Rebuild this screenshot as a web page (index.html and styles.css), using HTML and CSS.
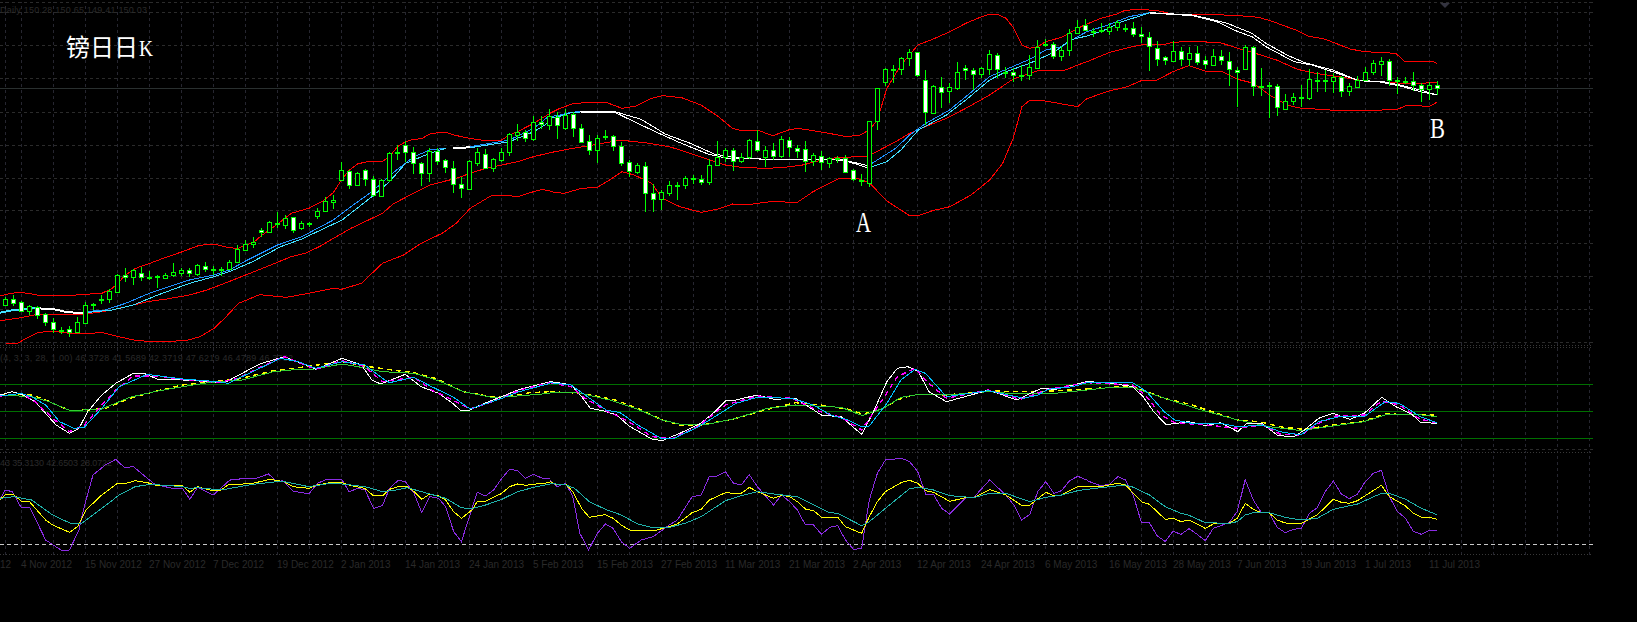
FILE: index.html
```html
<!DOCTYPE html>
<html lang="zh">
<head>
<meta charset="utf-8">
<title>镑日日K</title>
<link rel="stylesheet" href="styles.css">
</head>
<body>
<main class="chart">
<svg width="0" height="0" class="defs">
  <defs>
    <pattern id="vgrid" x="21" y="0" width="32" height="6" patternUnits="userSpaceOnUse"><rect width="1" height="3" class="vdash"/></pattern>
    <pattern id="vgrid0" x="5" y="0" width="1593" height="6" patternUnits="userSpaceOnUse"><rect width="1" height="3" class="vdash"/></pattern>
  </defs>
</svg>

<svg class="pane pane-main" viewBox="0 0 1593 344">
  <rect x="21" y="2" width="1569" height="342" fill="url(#vgrid)"/>
  <rect x="5" y="2" width="1" height="342" fill="url(#vgrid0)"/>
  <path class="hgrid" d="M0 2.5H1593M0 12.5H1593M0 45.5H1593M0 78.5H1593M0 112.5H1593M0 145.5H1593M0 178.5H1593M0 210.5H1593M0 243.5H1593M0 276.5H1593M0 309.5H1593M0 342.5H1593"/>
  <path class="price" d="M0 88.5H1593"/>
  <text class="dim" x="0" y="13" textLength="147">Daily 150.28 150.65 149.41 150.03</text>
  <path class="marker" d="M1440 3h10l-5 5z"/>

  <g transform="scale(.35088,.33333)">
    <polyline class="ln red" points="0,888 30,880 60,877 90,882 120,888 180,888 240,883 290,880 320,865 335,850 358,825 381,808 404,798 427,790 470,773 520,755 563,738 590,733 615,733 650,743 680,745 700,735 723,727 745,707 768,690 791,672 830,640 880,625 920,603 950,578 973,540 996,510 1019,492 1042,486 1090,484 1110,470 1133,440 1156,425 1179,418 1202,416 1225,402 1250,398 1270,397 1293,405 1338,415 1384,422 1430,420 1452,405 1475,395 1521,370 1544,355 1568,340"/>
    <polyline class="ln red" points="0,962 60,953 107,943 150,944 240,943 310,932 380,915 420,905 475,897 540,885 590,870 640,850 700,825 760,800 830,770 870,760 910,740 950,715 1000,685 1060,655 1090,640 1120,612 1160,590 1225,555 1300,535 1340,520 1384,505 1430,495 1475,485 1521,470 1568,458"/>
    <polyline class="ln red" points="0,1033 50,1030 80,1012 110,997 150,994 200,1000 240,1002 290,997 330,1008 390,1022 450,1025 530,1022 570,1010 610,985 640,955 680,910 740,884 815,892 870,882 950,865 973,868 1030,850 1060,820 1090,790 1150,765 1200,730 1260,700 1300,670 1340,625 1400,587 1450,587 1475,590 1521,575 1545,568 1568,573"/>
    <polyline class="ln fat cyan" points="0,938 40,930 84,925 107,925"/>
    <polyline class="ln fat white" points="107,925 150,927 190,936 236,940"/>
    <polyline class="ln blue" points="244,935 300,930 358,910 430,878 540,840 610,825 654,810 700,783 791,735 860,710 950,660 1000,620 1060,575 1130,510 1180,470 1225,450 1270,445"/>
    <polyline class="ln cyan" points="244,938 320,930 380,915 450,885 540,850 610,830 654,815 720,785 800,740 860,717 975,660 1060,590 1110,545 1156,490 1225,460 1270,445"/>
    <polyline class="ln fat white" points="1290,444 1340,442"/>
    <polyline class="ln blue" points="1340,440 1452,420 1521,385 1568,345"/>
    <polyline class="ln cyan" points="1340,443 1452,425 1521,395 1568,365"/>
  </g>
  <g transform="translate(550,0) scale(.35088,.33333)">
    <polyline class="ln red" points="0,340 22,328 65,311 110,307 160,307 205,325 245,318 290,295 320,287 375,293 430,315 480,350 520,385 545,392 590,390 635,407 680,390 705,385 750,392 800,401 840,409 880,407 910,390 933,360 960,265 1000,195 1025,165 1048,135 1090,118 1140,95 1185,70 1230,50 1253,43 1276,43 1300,55 1322,85 1345,135 1367,145 1390,140 1413,125 1458,112 1504,85 1530,72"/>
    <polyline class="ln red" points="0,458 65,445 135,433 180,424 205,421 270,428 340,440 400,460 450,478 500,495 545,502 610,505 660,503 720,495 775,480 820,472 900,470 918,462 985,425 1025,400 1070,380 1130,355 1185,325 1253,285 1320,237 1390,212 1470,210 1504,195 1530,185"/>
    <polyline class="ln red" points="0,575 40,580 90,565 135,562 170,540 205,515 240,525 290,550 320,595 370,620 430,637 480,627 520,612 570,613 630,605 705,607 750,575 820,537 880,537 910,548 960,603 1025,647 1050,647 1090,632 1140,620 1200,585 1253,540 1290,490 1320,415 1345,320 1367,301 1400,301 1504,320 1530,296"/>
    <polyline class="ln blue" points="0,350 30,345 60,337 85,335"/>
    <polyline class="ln cyan" points="0,355 30,348 60,338 85,336"/>
    <polyline class="ln white" points="85,334 185,335 260,358 330,403 400,430 470,463 560,476 660,479 770,477 830,478 905,497"/>
    <polyline class="ln white" points="85,336 185,337 230,360 300,395 370,428 450,462 500,474 600,477 700,479 800,478 850,485 905,503"/>
    <polyline class="ln blue" points="918,490 985,445 1025,405 1071,370 1139,330 1185,290 1253,230 1300,208 1367,178 1413,150 1458,140 1504,110 1530,95"/>
    <polyline class="ln cyan" points="918,500 960,485 1000,450 1050,390 1130,345 1185,300 1253,240 1300,215 1367,190 1440,155 1481,120 1530,108"/>
  </g>
  <g transform="translate(1087,0) scale(.35088,.33333)">
    <polyline class="ln red" points="0,72 40,55 85,42 108,31 155,28 200,32 245,42 330,43 420,46 490,52 530,65 600,92 630,108 680,118 750,147 790,155 880,160 905,184 985,184 997,190"/>
    <polyline class="ln red" points="0,185 65,157 130,140 155,135 220,133 245,127 300,124 380,128 430,145 480,160 540,180 600,208 650,220 730,232 790,243 840,246 900,250 950,250 997,247"/>
    <polyline class="ln red" points="0,296 65,272 110,262 155,242 200,240 245,215 290,197 340,214 385,215 430,238 475,250 520,285 570,315 610,325 650,327 720,332 800,332 885,328 910,316 945,317 975,320 997,307"/>
    <polyline class="ln blue" points="0,95 60,75 120,50 180,38"/>
    <polyline class="ln cyan" points="0,108 50,90 100,65 180,38"/>
    <polyline class="ln white" points="180,38 300,45 350,57 400,70 470,100 510,130 570,165 620,188 700,210 770,240 800,245 850,246 900,257 950,270 997,285"/>
    <polyline class="ln white" points="180,39 300,47 370,65 430,95 470,110 510,140 590,185 640,195 700,215 770,240 830,245 900,260 950,275 997,285"/>
  </g>

  <path class="wick" d="M5.5 297V306M13.5 295V306M21.5 301V312M29.5 305V315M37.5 306V319M45.5 313V326M53.5 318V333M61.5 327V334M69.5 326V337M77.5 317V333M85.5 302V324M93.5 303V310M101.5 295V304M109.5 289V303M117.5 274V293M125.5 268V282M133.5 269V285M141.5 267V281M149.5 271V280M157.5 275V288M165.5 273V279M173.5 263V277M181.5 268V276M189.5 268V277M197.5 264V276M205.5 262V272M213.5 266V275M221.5 267V276M229.5 260V270M237.5 245V263M245.5 240V251M253.5 237V248M261.5 228V237M269.5 221V233M277.5 212V228M285.5 215V229M293.5 217V233M301.5 221V230M309.5 222V227M317.5 208V219M325.5 197V212M333.5 195V209M341.5 162V180M349.5 170V189M357.5 172V186M365.5 169V186M373.5 176V197M381.5 179V197M389.5 152V182M397.5 145V160M405.5 141V162M413.5 147V174M421.5 162V186M429.5 148V182M437.5 148V165M445.5 159V173M453.5 161V193M461.5 177V198M469.5 160V190M477.5 148V166M485.5 149V168M493.5 158V172M501.5 148V162M509.5 133V156M517.5 124V141M525.5 130V142M533.5 116V141M541.5 116V129M549.5 109V130M557.5 112V139M565.5 109V130M573.5 112V137M581.5 124V143M589.5 135V155M597.5 135V163M605.5 130V140M613.5 135V151M621.5 142V166M629.5 160V177M637.5 163V174M645.5 162V212M653.5 184V212M661.5 190V210M669.5 181V196M677.5 182V200M685.5 176V189M693.5 175V184M701.5 175V185M709.5 159V185M717.5 141V166M725.5 148V162M733.5 148V171M741.5 153V163M749.5 139V159M757.5 130V152M765.5 146V167M773.5 143V160M781.5 136V158M789.5 137V157M797.5 145V158M805.5 141V172M813.5 153V166M821.5 151V170M829.5 157V168M837.5 156V163M845.5 155V173M853.5 169V181M861.5 174V186M869.5 121V187M877.5 88V130M885.5 68V86M893.5 65V83M901.5 57V75M909.5 49V66M917.5 52V77M925.5 70V125M933.5 85V114M941.5 77V108M949.5 83V103M957.5 62V90M965.5 65V80M973.5 68V90M981.5 67V78M989.5 50V75M997.5 53V78M1005.5 67V78M1013.5 68V82M1021.5 65V81M1029.5 55V80M1037.5 40V68M1045.5 39V47M1053.5 42V59M1061.5 46V61M1069.5 29V56M1077.5 20V34M1085.5 19V31M1093.5 28V37M1101.5 23V33M1109.5 23V35M1117.5 20V31M1125.5 24V32M1133.5 22V37M1141.5 27V43M1149.5 32V71M1157.5 41V66M1165.5 56V65M1173.5 41V62M1181.5 47V66M1189.5 47V66M1197.5 46V65M1205.5 56V69M1213.5 49V66M1221.5 50V65M1229.5 52V86M1237.5 67V107M1245.5 45V70M1253.5 46V96M1261.5 68V96M1269.5 82V118M1277.5 84V116M1285.5 94V110M1293.5 93V105M1301.5 85V107M1309.5 69V100M1317.5 72V92M1325.5 70V92M1333.5 73V93M1341.5 76V97M1349.5 83V96M1357.5 76V87M1365.5 67V81M1373.5 60V75M1381.5 57V76M1389.5 59V86M1397.5 77V94M1405.5 77V84M1413.5 72V91M1421.5 83V102M1429.5 82V100M1437.5 81V95"/>
  <path class="body-up" d="M3.5 299.5h4v6h-4zM27.5 306.5h4v5h-4zM59.5 330.5h4v1h-4zM75.5 322.5h4v10h-4zM83.5 305.5h4v18h-4zM99.5 299.5h4v1h-4zM107.5 291.5h4v8h-4zM115.5 275.5h4v17h-4zM131.5 270.5h4v7h-4zM147.5 277.5h4v1h-4zM155.5 276.5h4v1h-4zM163.5 275.5h4v3h-4zM171.5 272.5h4v3h-4zM179.5 270.5h4v3h-4zM195.5 265.5h4v9h-4zM211.5 269.5h4v1h-4zM219.5 269.5h4v1h-4zM227.5 262.5h4v7h-4zM235.5 249.5h4v13h-4zM243.5 244.5h4v6h-4zM251.5 242.5h4v2h-4zM267.5 222.5h4v10h-4zM283.5 218.5h4v7h-4zM299.5 223.5h4v5h-4zM307.5 223.5h4v1h-4zM315.5 211.5h4v5h-4zM323.5 201.5h4v10h-4zM331.5 200.5h4v2h-4zM339.5 170.5h4v10h-4zM355.5 173.5h4v12h-4zM379.5 180.5h4v16h-4zM387.5 153.5h4v27h-4zM395.5 152.5h4v1h-4zM427.5 151.5h4v22h-4zM467.5 161.5h4v28h-4zM475.5 152.5h4v11h-4zM491.5 159.5h4v9h-4zM499.5 152.5h4v8h-4zM507.5 134.5h4v18h-4zM515.5 132.5h4v3h-4zM531.5 122.5h4v17h-4zM547.5 116.5h4v9h-4zM563.5 115.5h4v13h-4zM595.5 138.5h4v12h-4zM603.5 136.5h4v1h-4zM635.5 165.5h4v7h-4zM659.5 192.5h4v7h-4zM667.5 185.5h4v8h-4zM675.5 185.5h4v1h-4zM683.5 178.5h4v7h-4zM691.5 178.5h4v1h-4zM707.5 165.5h4v17h-4zM715.5 157.5h4v8h-4zM723.5 150.5h4v7h-4zM739.5 157.5h4v4h-4zM747.5 140.5h4v17h-4zM763.5 150.5h4v7h-4zM779.5 139.5h4v17h-4zM811.5 155.5h4v6h-4zM827.5 158.5h4v5h-4zM835.5 158.5h4v1h-4zM867.5 121.5h4v62h-4zM875.5 88.5h4v33h-4zM883.5 69.5h4v13h-4zM891.5 69.5h4v1h-4zM899.5 58.5h4v11h-4zM907.5 52.5h4v6h-4zM931.5 86.5h4v27h-4zM947.5 87.5h4v4h-4zM955.5 72.5h4v16h-4zM979.5 68.5h4v6h-4zM987.5 54.5h4v15h-4zM1003.5 72.5h4v1h-4zM1019.5 75.5h4v1h-4zM1027.5 67.5h4v8h-4zM1035.5 47.5h4v21h-4zM1043.5 44.5h4v1h-4zM1059.5 50.5h4v6h-4zM1067.5 33.5h4v17h-4zM1075.5 27.5h4v6h-4zM1091.5 31.5h4v1h-4zM1099.5 30.5h4v1h-4zM1107.5 27.5h4v4h-4zM1115.5 22.5h4v5h-4zM1123.5 28.5h4v1h-4zM1171.5 51.5h4v10h-4zM1187.5 53.5h4v6h-4zM1211.5 56.5h4v9h-4zM1243.5 47.5h4v22h-4zM1259.5 86.5h4v1h-4zM1267.5 85.5h4v1h-4zM1283.5 101.5h4v8h-4zM1291.5 97.5h4v4h-4zM1299.5 97.5h4v1h-4zM1307.5 79.5h4v19h-4zM1315.5 80.5h4v1h-4zM1323.5 80.5h4v1h-4zM1331.5 77.5h4v4h-4zM1347.5 86.5h4v5h-4zM1355.5 80.5h4v7h-4zM1363.5 72.5h4v8h-4zM1371.5 63.5h4v9h-4zM1379.5 61.5h4v3h-4zM1395.5 80.5h4v1h-4zM1403.5 81.5h4v1h-4zM1427.5 85.5h4v4h-4z"/>
  <path class="body-down" d="M11.5 299.5h4v4h-4zM19.5 302.5h4v9h-4zM35.5 307.5h4v8h-4zM43.5 314.5h4v8h-4zM51.5 322.5h4v7h-4zM67.5 329.5h4v3h-4zM91.5 304.5h4v1h-4zM123.5 275.5h4v2h-4zM139.5 273.5h4v4h-4zM187.5 270.5h4v3h-4zM203.5 266.5h4v3h-4zM259.5 230.5h4v2h-4zM275.5 223.5h4v1h-4zM291.5 217.5h4v13h-4zM347.5 171.5h4v14h-4zM363.5 170.5h4v9h-4zM371.5 179.5h4v16h-4zM403.5 145.5h4v7h-4zM411.5 152.5h4v11h-4zM419.5 163.5h4v10h-4zM435.5 151.5h4v10h-4zM443.5 160.5h4v7h-4zM451.5 168.5h4v16h-4zM459.5 184.5h4v4h-4zM483.5 154.5h4v14h-4zM523.5 132.5h4v6h-4zM539.5 122.5h4v2h-4zM555.5 117.5h4v8h-4zM571.5 114.5h4v14h-4zM579.5 128.5h4v14h-4zM587.5 141.5h4v9h-4zM611.5 136.5h4v10h-4zM619.5 146.5h4v17h-4zM627.5 162.5h4v9h-4zM643.5 166.5h4v27h-4zM651.5 193.5h4v6h-4zM699.5 179.5h4v3h-4zM731.5 150.5h4v11h-4zM755.5 141.5h4v9h-4zM771.5 150.5h4v6h-4zM787.5 140.5h4v7h-4zM795.5 148.5h4v3h-4zM803.5 149.5h4v12h-4zM819.5 156.5h4v6h-4zM843.5 158.5h4v14h-4zM851.5 170.5h4v9h-4zM859.5 180.5h4v1h-4zM915.5 52.5h4v23h-4zM923.5 80.5h4v32h-4zM939.5 87.5h4v5h-4zM963.5 68.5h4v2h-4zM971.5 70.5h4v4h-4zM995.5 55.5h4v14h-4zM1011.5 72.5h4v3h-4zM1051.5 44.5h4v12h-4zM1083.5 25.5h4v5h-4zM1131.5 28.5h4v6h-4zM1139.5 34.5h4v2h-4zM1147.5 37.5h4v9h-4zM1155.5 48.5h4v11h-4zM1163.5 57.5h4v3h-4zM1179.5 51.5h4v8h-4zM1195.5 53.5h4v9h-4zM1203.5 60.5h4v4h-4zM1219.5 56.5h4v4h-4zM1227.5 61.5h4v8h-4zM1235.5 70.5h4v2h-4zM1251.5 47.5h4v39h-4zM1275.5 86.5h4v21h-4zM1339.5 77.5h4v14h-4zM1387.5 61.5h4v19h-4zM1411.5 81.5h4v4h-4zM1419.5 85.5h4v4h-4zM1435.5 85.5h4v3h-4z"/>

  <text class="title" x="66" y="56">镑日日</text>
  <text class="title-k" x="139" y="56" textLength="14" lengthAdjust="spacingAndGlyphs">K</text>
  <text class="mark" x="856" y="232" textLength="15" lengthAdjust="spacingAndGlyphs">A</text>
  <text class="mark" x="1430" y="138" textLength="15" lengthAdjust="spacingAndGlyphs">B</text>
</svg>

<svg class="pane pane-osc1" viewBox="0 344 1593 107">
  <rect x="21" y="344" width="1569" height="105" fill="url(#vgrid)"/>
  <rect x="5" y="344" width="1" height="105" fill="url(#vgrid0)"/>
  <path class="hdot" d="M0 345.5H1593M0 347.5H1593"/>
  <path class="hgrid" d="M0 449.5H1593"/>
  <text class="dim" x="0" y="361" textLength="293">(4, 3, 3, 28, 1.00) 46.3728 41.5689 42.3719 47.6219 46.4789 46.3782</text>
  <path class="level" d="M0 384.5H1593M0 411.5H1593M0 438.5H1593"/>
  <g transform="translate(0,340) scale(.35088,.33333)">
    <polyline class="ln dash yellow" points="0,163 90,165 130,180 200,212 250,210 300,205 370,175 440,155 520,135 600,125 680,117 780,92 850,83 975,65 1040,78 1130,92 1180,98 1250,118 1320,155 1400,170 1450,170 1510,158 1568,155"/>
    <polyline class="ln lime" points="0,165 90,170 140,185 200,212 290,207 370,172 440,155 520,140 600,127 690,120 780,95 830,90 880,90 975,72 1030,82 1090,95 1180,100 1250,122 1320,155 1400,172 1450,170 1510,165 1568,160"/>
    <polyline class="ln white" points="0,165 35,155 65,165 100,185 130,220 160,255 198,280 225,265 250,215 290,165 330,130 380,100 410,100 450,118 520,120 600,125 640,128 690,100 740,72 810,50 860,70 900,88 975,55 1030,75 1060,120 1085,132 1155,103 1200,140 1250,160 1290,190 1315,213 1340,210 1380,190 1430,170 1480,148 1530,135 1568,125"/>
    <polyline class="ln dash magenta" points="0,168 60,160 100,185 150,235 198,275 240,255 290,195 330,150 380,108 450,108 520,118 620,127 680,115 740,82 810,50 900,88 975,62 1040,80 1090,125 1180,112 1230,150 1290,180 1340,207 1430,175 1480,150 1568,128"/>
    <polyline class="ln sky" points="0,168 60,160 90,170 130,195 170,245 210,265 240,262 290,205 340,140 420,103 520,117 620,125 650,130 730,90 800,55 850,65 900,85 975,65 1040,75 1090,115 1110,128 1180,112 1230,140 1290,170 1340,207 1430,175 1480,155 1568,130"/>
  </g>
  <g transform="translate(550,340) scale(.35088,.33333)">
    <polyline class="ln dash yellow" points="0,155 90,160 180,178 250,205 320,240 370,255 430,255 520,238 620,208 700,188 790,197 850,208 890,222 940,210 990,180 1040,163 1130,165 1250,152 1330,155 1400,155 1530,147"/>
    <polyline class="ln lime" points="0,158 80,158 170,180 250,208 320,240 380,255 440,255 530,235 620,205 700,195 830,202 890,227 950,205 1000,172 1040,165 1130,165 1250,155 1330,162 1420,162 1530,150"/>
    <polyline class="ln white" points="0,125 35,130 60,135 90,170 115,205 150,212 190,225 225,258 290,297 320,302 370,280 430,250 470,215 500,183 530,180 590,165 640,178 700,175 775,226 830,230 888,283 920,220 960,125 990,85 1020,80 1050,95 1080,155 1130,185 1200,165 1250,150 1330,180 1400,145 1440,148 1490,135 1530,125"/>
    <polyline class="ln dash magenta" points="0,128 60,140 100,175 160,212 225,245 290,290 350,295 420,260 500,195 590,168 690,175 770,215 830,232 888,270 950,175 990,110 1040,85 1080,130 1130,175 1250,150 1340,178 1420,148 1530,128"/>
    <polyline class="ln sky" points="0,128 60,135 100,165 160,210 200,218 250,255 320,297 350,297 420,262 470,230 530,190 590,172 690,175 750,195 800,225 850,240 888,260 910,258 960,190 1000,120 1040,88 1070,100 1130,170 1250,152 1350,175 1390,165 1420,148 1490,140 1530,128"/>
  </g>
  <g transform="translate(1087,340) scale(.35088,.33333)">
    <polyline class="ln dash yellow" points="0,147 130,138 220,175 290,192 350,213 430,240 490,245 560,262 620,268 700,255 790,243 850,222 990,225"/>
    <polyline class="ln lime" points="0,150 70,142 130,142 230,178 320,208 430,240 520,260 610,272 700,258 790,245 850,225 930,222 997,230"/>
    <polyline class="ln white" points="0,125 60,128 130,140 160,170 190,215 225,254 290,245 340,257 380,248 430,275 455,250 500,252 545,287 590,290 620,270 660,235 700,220 750,238 790,220 840,172 880,200 925,222 950,247 997,250"/>
    <polyline class="ln dash magenta" points="0,128 130,135 170,170 210,225 250,248 340,255 430,265 500,255 550,282 610,285 660,250 710,228 790,225 840,183 890,195 950,238 997,248"/>
    <polyline class="ln sky" points="0,128 130,128 170,155 220,215 250,240 300,250 380,250 430,260 500,255 550,275 610,285 660,245 720,230 790,230 850,185 890,190 950,230 997,248"/>
  </g>
</svg>

<svg class="pane pane-osc2" viewBox="0 451 1593 104">
  <rect x="21" y="451" width="1569" height="104" fill="url(#vgrid)"/>
  <rect x="5" y="451" width="1" height="104" fill="url(#vgrid0)"/>
  <path class="hdot" d="M0 452.5H1593"/>
  <text class="dim" x="0" y="466" textLength="112">43 35.3130 42.6503 28.0722</text>
  <path class="zero" d="M0 544.5H1593"/>
  <path class="hdot" d="M0 554.5H1593"/>
  <g transform="translate(0,340) scale(.35088,.33333)">
    <polyline class="ln violet" points="0,478 15,450 35,455 60,502 85,502 130,600 175,631 198,630 225,570 240,500 265,405 300,375 330,358 355,383 380,380 440,432 490,445 520,445 541,478 563,442 608,465 650,425 660,418 730,415 765,402 790,425 805,422 835,453 880,462 905,430 930,418 975,420 995,455 1020,445 1040,450 1065,505 1090,497 1110,445 1135,421 1155,425 1180,460 1202,518 1225,470 1250,475 1270,500 1293,575 1315,605 1360,457 1384,468 1407,450 1430,415 1452,388 1475,392 1498,415 1521,403 1544,414 1568,415"/>
    <polyline class="ln yellow" points="0,478 15,465 40,465 60,483 85,486 130,540 150,555 198,577 221,560 245,510 290,465 335,430 360,430 385,422 420,428 450,437 520,437 541,457 563,440 608,453 630,450 650,435 720,430 770,418 810,425 835,440 880,445 905,435 940,428 975,428 1000,437 1040,445 1065,468 1090,468 1110,448 1135,440 1160,440 1180,455 1202,478 1225,462 1250,468 1270,480 1293,515 1315,535 1345,510 1360,485 1384,484 1430,460 1452,440 1475,432 1498,436 1544,430 1568,428"/>
    <polyline class="ln teal" points="0,475 40,470 90,480 150,525 205,552 230,552 290,505 340,465 385,440 430,433 520,440 541,445 563,443 630,450 720,433 790,425 810,425 880,440 930,432 975,432 1040,440 1090,455 1130,450 1160,443 1225,462 1270,475 1315,503 1340,507 1384,495 1430,478 1475,455 1521,442 1568,432"/>
  </g>
  <g transform="translate(550,340) scale(.35088,.33333)">
    <polyline class="ln violet" points="0,420 20,440 45,430 65,470 85,580 110,630 135,580 158,552 180,565 203,605 227,625 260,600 294,590 340,555 363,540 405,470 431,465 454,410 477,408 500,395 523,430 545,435 568,404 591,440 637,495 660,465 683,485 705,510 728,555 751,555 774,583 797,562 820,557 842,600 865,628 888,626 910,480 933,400 956,360 1002,355 1025,365 1048,395 1071,463 1093,463 1116,505 1139,522 1185,473 1207,473 1253,420 1299,465 1322,495 1344,540 1367,524 1390,455 1413,425 1436,460 1458,452 1481,422 1504,409 1530,420"/>
    <polyline class="ln yellow" points="0,425 20,435 45,432 65,455 90,505 112,532 135,528 158,524 180,535 203,555 227,570 294,573 340,560 363,552 405,518 431,508 454,480 500,458 523,460 545,460 568,442 591,455 637,475 660,466 683,470 705,485 728,507 751,512 774,532 820,532 842,560 888,580 910,530 933,485 956,455 1002,427 1025,421 1048,430 1071,452 1093,457 1139,484 1185,473 1207,473 1253,449 1299,465 1344,496 1367,496 1413,457 1436,467 1458,465 1504,440 1530,440"/>
    <polyline class="ln teal" points="0,430 45,435 70,445 112,485 158,508 203,525 250,552 294,563 340,562 385,550 431,530 500,482 545,467 591,455 637,462 705,470 797,518 820,520 888,557 910,545 956,505 1025,446 1048,442 1093,450 1139,467 1207,473 1253,460 1299,460 1367,485 1413,472 1458,465 1504,452 1530,448"/>
  </g>
  <g transform="translate(1087,340) scale(.35088,.33333)">
    <polyline class="ln violet" points="0,422 40,438 65,432 88,410 110,420 133,470 155,547 178,549 200,587 223,605 245,574 268,583 291,566 314,583 337,602 360,565 405,548 428,515 451,419 474,480 497,518 519,518 542,562 565,578 588,568 611,565 634,520 656,503 679,455 702,423 725,462 748,476 771,462 793,425 816,400 839,391 862,470 885,515 908,535 930,574 953,583 976,571 997,571"/>
    <polyline class="ln yellow" points="0,440 40,440 86,430 110,435 155,485 178,493 223,538 245,535 268,545 291,540 337,565 360,552 405,550 428,535 451,490 474,508 497,518 519,518 542,540 565,549 611,550 634,537 656,525 702,478 725,487 748,490 771,482 839,436 862,470 908,498 930,520 953,532 976,532 997,538"/>
    <polyline class="ln teal" points="0,448 65,440 110,435 133,442 178,465 223,500 268,520 291,526 337,548 405,550 428,545 451,525 474,518 519,518 565,532 611,540 656,535 702,508 771,492 839,460 862,460 908,478 953,505 997,524"/>
  </g>
</svg>

<svg class="pane pane-axis" viewBox="0 555 1593 30">
  <g class="dates">
    <text x="0" y="568">12</text>
    <text x="21" y="568">4 Nov 2012</text>
    <text x="85" y="568">15 Nov 2012</text>
    <text x="149" y="568">27 Nov 2012</text>
    <text x="213" y="568">7 Dec 2012</text>
    <text x="277" y="568">19 Dec 2012</text>
    <text x="341" y="568">2 Jan 2013</text>
    <text x="405" y="568">14 Jan 2013</text>
    <text x="469" y="568">24 Jan 2013</text>
    <text x="533" y="568">5 Feb 2013</text>
    <text x="597" y="568">15 Feb 2013</text>
    <text x="661" y="568">27 Feb 2013</text>
    <text x="725" y="568">11 Mar 2013</text>
    <text x="789" y="568">21 Mar 2013</text>
    <text x="853" y="568">2 Apr 2013</text>
    <text x="917" y="568">12 Apr 2013</text>
    <text x="981" y="568">24 Apr 2013</text>
    <text x="1045" y="568">6 May 2013</text>
    <text x="1109" y="568">16 May 2013</text>
    <text x="1173" y="568">28 May 2013</text>
    <text x="1237" y="568">7 Jun 2013</text>
    <text x="1301" y="568">19 Jun 2013</text>
    <text x="1365" y="568">1 Jul 2013</text>
    <text x="1429" y="568">11 Jul 2013</text>
  </g>
</svg>
</main>
</body>
</html>
```
FILE: styles.css
```css
html, body {
  margin: 0;
  background: #000;
}
body {
  width: 1637px;
  height: 622px;
  overflow: hidden;
}
.chart {
  display: flex;
  flex-direction: column;
  width: 1593px;
}
.defs {
  position: absolute;
}
.pane {
  display: block;
  width: 1593px;
  flex: none;
}
.pane-main { height: 344px; }
.pane-osc1 { height: 107px; }
.pane-osc2 { height: 104px; }
.pane-axis { height: 30px; }

.vdash { fill: #262630; }
.hgrid {
  fill: none;
  stroke: #2b2b2b;
  stroke-dasharray: 3 3;
  shape-rendering: crispEdges;
}
.hdot {
  fill: none;
  stroke: #383838;
  stroke-dasharray: 1 2;
  shape-rendering: crispEdges;
}
.price {
  fill: none;
  stroke: #2a3030;
  shape-rendering: crispEdges;
}
.level {
  fill: none;
  stroke: #006f00;
  shape-rendering: crispEdges;
}
.zero {
  fill: none;
  stroke: #c8c8c8;
  stroke-dasharray: 4 3;
  shape-rendering: crispEdges;
}
.marker { fill: #33333f; }

.ln {
  fill: none;
  stroke-width: 1;
  vector-effect: non-scaling-stroke;
  shape-rendering: crispEdges;
}
.fat { stroke-width: 2; }
.dash { stroke-dasharray: 5 4; stroke-width: 1.4; }
.red { stroke: #f00; }
.white { stroke: #fff; }
.blue { stroke: #1e90ff; }
.cyan { stroke: #40e0ff; }
.sky { stroke: #00bfff; }
.yellow { stroke: #ff0; }
.lime { stroke: #32cd32; }
.magenta { stroke: #f0f; }
.violet { stroke: #8a2be2; }
.teal { stroke: #20b2aa; }

.wick {
  fill: none;
  stroke: #0f0;
  shape-rendering: crispEdges;
}
.body-up {
  fill: #000;
  stroke: #0f0;
  shape-rendering: crispEdges;
}
.body-down {
  fill: #fff;
  stroke: #0f0;
  shape-rendering: crispEdges;
}

.dim {
  font: 9px "Liberation Sans", Arial, sans-serif;
  fill: #2a2a2a;
}
.dates text {
  font: 10px "Liberation Sans", Arial, sans-serif;
  fill: #2a2a2a;
}
.title {
  font: 24px "Noto Sans CJK SC", "Liberation Serif", serif;
  fill: #fff;
}
.title-k {
  font: 24px "Liberation Serif", serif;
  fill: #fff;
}
.mark {
  font: 29px "Liberation Serif", serif;
  fill: #fff;
}
```
